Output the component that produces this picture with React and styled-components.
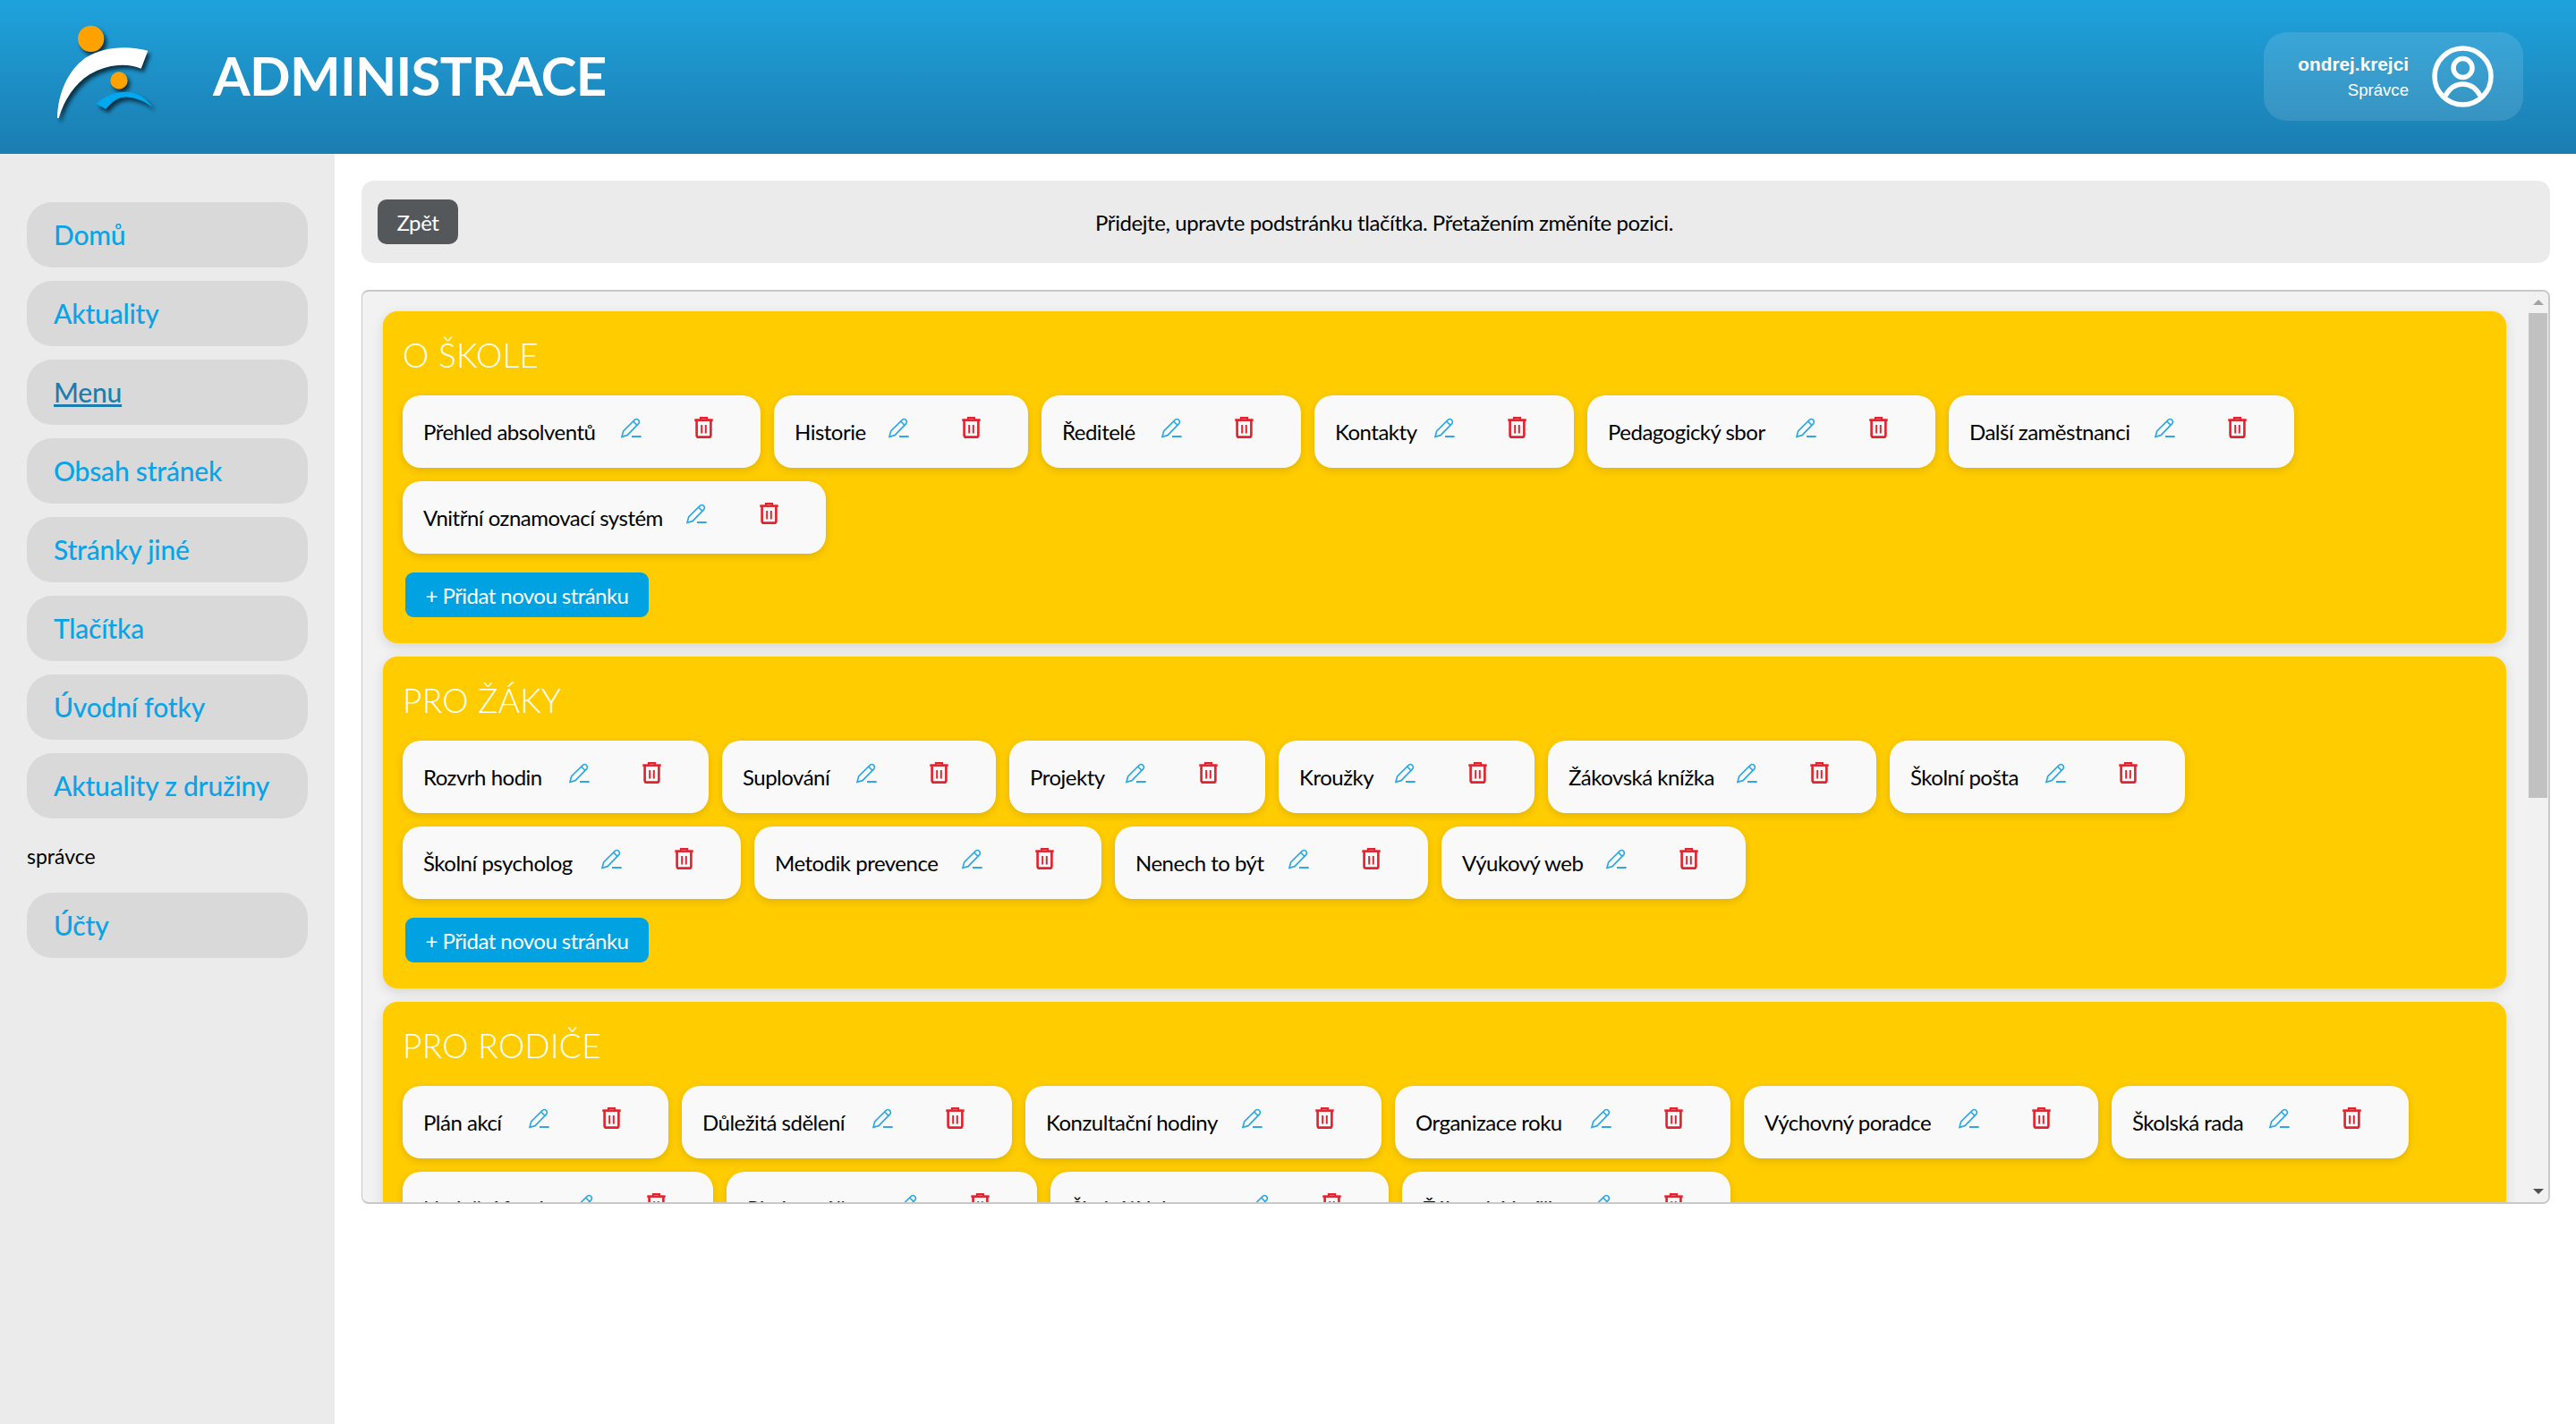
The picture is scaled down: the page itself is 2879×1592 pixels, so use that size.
import React from 'react'
import styled, { createGlobalStyle } from 'styled-components'

const FONT = `Lato, "Open Sans", sans-serif`

const sections = [
  {
    title: 'O ŠKOLE',
    pages: [
      ['Přehled absolventů', 400], ['Historie', 284], ['Ředitelé', 290], ['Kontakty', 290],
      ['Pedagogický sbor', 389], ['Další zaměstnanci', 386], ['Vnitřní oznamovací systém', 473],
    ],
  },
  {
    title: 'PRO ŽÁKY',
    pages: [
      ['Rozvrh hodin', 342], ['Suplování', 306], ['Projekty', 286], ['Kroužky', 286],
      ['Žákovská knížka', 367], ['Školní pošta', 330], ['Školní psycholog', 378],
      ['Metodik prevence', 388], ['Nenech to být', 350], ['Výukový web', 340],
    ],
  },
  {
    title: 'PRO RODIČE',
    pages: [
      ['Plán akcí', 297], ['Důležitá sdělení', 369], ['Konzultační hodiny', 398],
      ['Organizace roku', 375], ['Výchovný poradce', 396], ['Školská rada', 332],
      ['Nadační fond', 347], ['Platby a účty', 347], ['Školní jídelna', 378], ['Žákovská knížka', 367],
    ],
  },
]

const navTop = ['Domů', 'Aktuality', 'Menu', 'Obsah stránek', 'Stránky jiné', 'Tlačítka', 'Úvodní fotky', 'Aktuality z družiny']

function Logo() {
  return (
    <LogoSvg viewBox="0 0 420 375">
      <path fill="#fff" d="M42 336 C44 250 80 175 135 135 C195 95 280 92 346 110 L323 170 C270 148 205 158 150 190 C100 222 65 275 47 336 Z" />
      <path fill="#00a8ef" d="M172 288 C205 258 245 245 285 249 C318 254 345 274 362 301 C335 280 300 264 265 266 C243 268 222 284 205 306 Z" />
      <circle fill="#ffa200" cx="155" cy="70" r="44" />
      <circle fill="#ffa200" cx="249" cy="210" r="29" />
    </LogoSvg>
  )
}

function UserIcon() {
  return (
    <svg width="69" height="69" viewBox="0 0 69 69" fill="none" stroke="#fff" strokeWidth="5.5">
      <circle cx="34.5" cy="34.5" r="31.5" />
      <circle cx="34.5" cy="25" r="10.5" />
      <path d="M15 56 C20 47 27 43 34.5 43 C42 43 49 47 54 56" />
    </svg>
  )
}

function PencilIcon() {
  return (
    <IconSvg $top={25} width="23" height="23" viewBox="0 0 69 69" fill="none" stroke="#2fa8e0" strokeWidth="5">
      <path d="M3 64 L8 45 L46 7 Q52 2 58 7 Q64 13 59 20 L21 59 Z" />
      <path d="M41 12 L54 25" />
      <path d="M36 63 H68" strokeWidth="6" />
    </IconSvg>
  )
}

function TrashIcon() {
  return (
    <IconSvg $top={24} width="21" height="24" viewBox="0 0 62 73" fill="none" stroke="#e0232e" strokeWidth="8">
      <path d="M0 11 H62" />
      <path d="M20 10 V3 H42 V10" strokeWidth="6" />
      <path d="M7 13 V62 Q7 69 14 69 H48 Q55 69 55 62 V13" />
      <path d="M24 27 V56 M38 27 V56" strokeWidth="6" />
    </IconSvg>
  )
}

function App() {
  return (
    <Page>
      <GlobalStyle />
      <Header>
        <Logo />
        <Title>ADMINISTRACE</Title>
        <UserBox>
          <UserText>
            <UserName>ondrej.krejci</UserName>
            <UserRole>Správce</UserRole>
          </UserText>
          <UserIcon />
        </UserBox>
      </Header>

      <Body>
        <Sidebar>
          {navTop.map((item) => (
            <NavItem key={item} $active={item === 'Menu'}>{item}</NavItem>
          ))}
          <NavLabel>správce</NavLabel>
          <NavItem>Účty</NavItem>
        </Sidebar>

        <Content>
          <TopBar>
            <BackButton>Zpět</BackButton>
            <Hint>Přidejte, upravte podstránku tlačítka. Přetažením změníte pozici.</Hint>
          </TopBar>

          <Panel>
            <PanelInner>
              {sections.map((section) => (
                <Section key={section.title}>
                  <SectionTitle>{section.title}</SectionTitle>
                  <Chips>
                    {section.pages.map(([name, width], i) => (
                      <Chip key={i} $width={width}>
                        <ChipText>{name}</ChipText>
                        <PencilIcon />
                        <TrashGap />
                        <TrashIcon />
                      </Chip>
                    ))}
                  </Chips>
                  <AddButton>+ Přidat novou stránku</AddButton>
                </Section>
              ))}
            </PanelInner>
            <Scrollbar>
              <ArrowButton><ArrowUp /></ArrowButton>
              <Thumb />
              <ArrowButton><ArrowDown /></ArrowButton>
            </Scrollbar>
          </Panel>
        </Content>
      </Body>
    </Page>
  )
}

const GlobalStyle = createGlobalStyle`
  html, body {
    margin: 0;
    padding: 0;
    background: #fff;
    font-family: ${FONT};
  }
`

const Page = styled.div`
  width: 2879px;
  height: 1592px;
  display: flex;
  flex-direction: column;
  overflow: hidden;
`

const Header = styled.header`
  height: 172px;
  flex-shrink: 0;
  display: flex;
  align-items: center;
  padding: 0 59px 0 50px;
  box-sizing: border-box;
  background: linear-gradient(to bottom, #1fa2dc, #1b7db0);
`

const LogoSvg = styled.svg`
  width: 140px;
  height: 125px;
  margin-top: -7px;
  filter: drop-shadow(3px 4px 2px rgba(0, 0, 0, 0.65));
`

const Title = styled.h1`
  margin: -4px 0 0 48px;
  color: #fff;
  font-size: 60px;
  font-weight: 700;
  letter-spacing: -0.7px;
`

const UserBox = styled.div`
  margin-left: auto;
  width: 290px;
  height: 99px;
  margin-top: -1px;
  box-sizing: border-box;
  padding-right: 33px;
  display: flex;
  align-items: center;
  justify-content: flex-end;
  gap: 26px;
  border-radius: 26px;
  background: rgba(255, 255, 255, 0.12);
`

const UserText = styled.div`
  display: flex;
  flex-direction: column;
  align-items: flex-end;
  gap: 6px;
  color: #fff;
  font-family: "Liberation Sans", sans-serif;
`

const UserName = styled.span`
  font-size: 20.8px;
  font-weight: 700;
`

const UserRole = styled.span`
  font-size: 18.6px;
`

const Body = styled.div`
  flex: 1;
  display: flex;
  min-height: 0;
`

const Sidebar = styled.nav`
  width: 374px;
  flex-shrink: 0;
  box-sizing: border-box;
  padding: 54px 30px 0;
  display: flex;
  flex-direction: column;
  gap: 15px;
  background: #ebebeb;
`

const NavItem = styled.a`
  height: 73px;
  box-sizing: border-box;
  padding: 0 0 2px 30px;
  display: flex;
  align-items: center;
  border-radius: 28px;
  background: #d9d9d9;
  color: ${(p) => (p.$active ? '#1b7db0' : '#0aa3e6')};
  text-decoration: ${(p) => (p.$active ? 'underline' : 'none')};
  font-size: 30px;
  font-weight: 500;
  letter-spacing: -0.2px;
`

const NavLabel = styled.div`
  height: 53px;
  display: flex;
  align-items: center;
  color: #000;
  font-size: 23px;
`

const Content = styled.main`
  flex: 1;
  min-width: 0;
  box-sizing: border-box;
  padding: 30px 29px 0 30px;
  display: flex;
  flex-direction: column;
  gap: 30px;
`

const TopBar = styled.div`
  height: 92px;
  flex-shrink: 0;
  display: flex;
  align-items: center;
  padding-left: 18px;
  border-radius: 14px;
  background: #ebebeb;
`

const BackButton = styled.button`
  width: 90px;
  height: 50px;
  border: none;
  border-radius: 10px;
  padding: 0;
  background: #54585a;
  color: #fff;
  font-family: ${FONT};
  font-size: 24px;
  letter-spacing: -0.4px;
`

const Hint = styled.div`
  flex: 1;
  padding-right: 268px;
  text-align: center;
  color: #000;
  font-size: 24px;
  letter-spacing: -0.42px;
`

const Panel = styled.div`
  height: 1022px;
  flex-shrink: 0;
  box-sizing: border-box;
  display: flex;
  overflow: hidden;
  border-style: solid;
  border-color: #c8c8c8;
  border-width: 2px 2px 2px 1px;
  border-radius: 8px;
  background: #f2f2f2;
`

const PanelInner = styled.div`
  flex: 1;
  min-width: 0;
  padding: 22px 24px 0 23px;
  display: flex;
  flex-direction: column;
  gap: 15px;
`

const Section = styled.section`
  flex-shrink: 0;
  box-sizing: border-box;
  padding: 0 22px 29px;
  display: flex;
  flex-direction: column;
  border-radius: 16px;
  background: #ffcc00;
  box-shadow: 0 4px 14px rgba(0, 0, 0, 0.12);
`

const SectionTitle = styled.h2`
  height: 94px;
  margin: 0;
  padding-top: 26px;
  box-sizing: border-box;
  color: #fff;
  font-size: 37px;
  font-weight: 300;
  line-height: 46px;
  letter-spacing: 0.3px;
`

const Chips = styled.div`
  display: flex;
  flex-wrap: wrap;
  gap: 15px;
`

const Chip = styled.div`
  width: ${(p) => p.$width}px;
  height: 81px;
  box-sizing: border-box;
  padding: 0 53px 0 23px;
  display: flex;
  align-items: center;
  border-radius: 20px;
  background: #f9f9f9;
  box-shadow: 0 3px 8px rgba(0, 0, 0, 0.12);
`

const ChipText = styled.span`
  margin-right: auto;
  color: #000;
  font-size: 24px;
  letter-spacing: -0.5px;
  white-space: nowrap;
`

const IconSvg = styled.svg`
  flex-shrink: 0;
  align-self: flex-start;
  margin-top: ${(p) => p.$top}px;
`

const TrashGap = styled.span`
  width: 59px;
  flex-shrink: 0;
`

const AddButton = styled.button`
  width: 272px;
  height: 50px;
  margin: 21px 0 0 3px;
  padding: 0;
  border: none;
  border-radius: 9px;
  background: #00a2e1;
  color: #fff;
  font-family: ${FONT};
  font-size: 24px;
  letter-spacing: -0.55px;
`

const Scrollbar = styled.div`
  width: 23px;
  flex-shrink: 0;
  display: flex;
  flex-direction: column;
  background: #f1f1f1;
`

const ArrowButton = styled.div`
  height: 24px;
  flex-shrink: 0;
  display: flex;
  align-items: center;
  justify-content: center;
`

const ArrowUp = styled.span`
  border-left: 6px solid transparent;
  border-right: 6px solid transparent;
  border-bottom: 6px solid #a3a3a3;
`

const ArrowDown = styled.span`
  border-left: 6px solid transparent;
  border-right: 6px solid transparent;
  border-top: 6px solid #505050;
`

const Thumb = styled.div`
  width: 21px;
  height: 542px;
  margin: 0 auto auto 1px;
  background: #c1c1c1;
`

export default App
